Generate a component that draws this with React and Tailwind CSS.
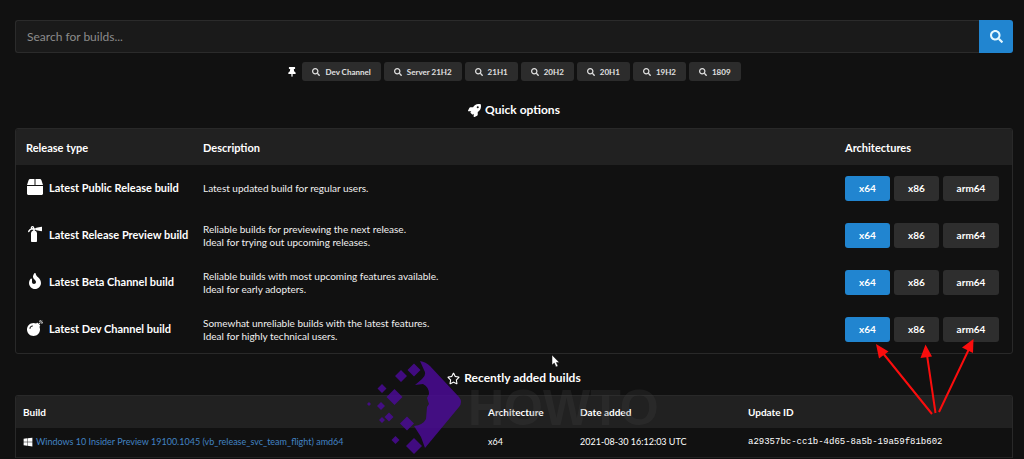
import { FaBomb, FaBox, FaFire, FaFireExtinguisher, FaRegStar, FaRocket, FaSearch, FaThumbtack, FaWindows } from 'react-icons/fa'

const pinned = ['Dev Channel', 'Server 21H2', '21H1', '20H2', '20H1', '19H2', '1809']

const releases = [
    { icon: FaBox, name: 'Latest Public Release build', lines: ['Latest updated build for regular users.'] },
    { icon: FaFireExtinguisher, name: 'Latest Release Preview build', lines: ['Reliable builds for previewing the next release.', 'Ideal for trying out upcoming releases.'] },
    { icon: FaFire, name: 'Latest Beta Channel build', lines: ['Reliable builds with most upcoming features available.', 'Ideal for early adopters.'] },
    { icon: FaBomb, name: 'Latest Dev Channel build', lines: ['Somewhat unreliable builds with the latest features.', 'Ideal for highly technical users.'] },
]

const builds = [
    {
        name: 'Windows 10 Insider Preview 19100.1045 (vb_release_svc_team_flight) amd64',
        arch: 'x64',
        added: '2021-08-30 16:12:03 UTC',
        id: 'a29357bc-cc1b-4d65-8a5b-19a59f81b602',
    },
]

const SearchBar = () => (
    <form className="flex h-[33px]" onSubmit={(e) => e.preventDefault()}>
        <input
            type="text"
            aria-label="Search for builds"
            placeholder="Search for builds..."
            className="min-w-0 flex-1 rounded-l-[3px] border border-r-0 border-[#2b2b2b] bg-[#1a1a1a] px-[11px] text-[12px] text-white outline-none placeholder:text-[#8c8c8c]"
        />
        <button type="submit" aria-label="Search" className="flex w-[34px] items-center justify-center rounded-r-[3px] bg-[#2185d0] text-[13px] text-[#e4f8ff]">
            <FaSearch />
        </button>
    </form>
)

const PinnedSearches = () => (
    <div className="mt-[9px] flex items-center justify-center gap-[3px]">
        <FaThumbtack className="mr-[2px] text-[10px]" />
        {pinned.map((label) => (
            <button key={label} type="button" className="flex h-[19px] items-center gap-[5px] rounded-[3px] bg-[#2c2c2c] px-[10px] text-[8px] font-bold text-[#e0e0e0]">
                <FaSearch />
                {label}
            </button>
        ))}
    </div>
)

const Heading = ({ icon: Icon, children }) => (
    <h2 className="flex items-center justify-center gap-1 text-[12px] leading-4 font-bold">
        <Icon className="text-[13px]" />
        {children}
    </h2>
)

const QuickOptions = () => (
    <div className="mt-[10px] overflow-hidden rounded-[3px] border border-[#292929]">
        <table className="w-full table-fixed text-left text-[11px] leading-[13px]">
            <thead className="bg-[#212121]">
                <tr className="h-9">
                    <th className="w-[177px] px-[10px]">Release type</th>
                    <th className="px-[10px]">Description</th>
                    <th className="w-[177px] px-[10px]">Architectures</th>
                </tr>
            </thead>
            <tbody>
                {releases.map(({ icon: Icon, name, lines }) => (
                    <tr key={name} className="h-[47px]">
                        <td className="px-[10px] pb-[3px]">
                            <div className="flex items-center gap-[5px] font-bold whitespace-nowrap">
                                <Icon className="w-[18px] shrink-0 text-base" />
                                {name}
                            </div>
                        </td>
                        <td className="px-[10px] text-[10px] leading-[13px] text-[#f0f0f0]">
                            {lines.map((line) => (
                                <p key={line}>{line}</p>
                            ))}
                        </td>
                        <td className="px-[10px]">
                            <div className="flex gap-1 text-[10px] font-bold">
                                <button type="button" className="h-[25px] w-[45px] rounded-[3px] bg-[#2185d0]">x64</button>
                                <button type="button" className="h-[25px] w-[45px] rounded-[3px] bg-[#2e2e2e]">x86</button>
                                <button type="button" className="h-[25px] w-14 rounded-[3px] bg-[#2e2e2e]">arm64</button>
                            </div>
                        </td>
                    </tr>
                ))}
            </tbody>
        </table>
    </div>
)

const RecentBuilds = () => (
    <div className="mt-[9px] overflow-hidden rounded-t-[3px] border border-b-0 border-[#292929]">
        <table className="w-full table-fixed text-left text-[10px] leading-3">
            <thead className="bg-[#212121]">
                <tr className="h-8">
                    <th className="px-[7px]">Build</th>
                    <th className="w-[92px] px-[7px]">Architecture</th>
                    <th className="w-[168px] px-[7px]">Date added</th>
                    <th className="w-[271px] px-[7px]">Update ID</th>
                </tr>
            </thead>
            <tbody className="text-[9px]">
                {builds.map((build) => (
                    <tr key={build.id} className="h-[29px] border-b border-[#222]">
                        <td className="px-[7px]">
                            <div className="flex items-center gap-[3px]">
                                <FaWindows className="text-[10px]" />
                                <a href="#build" className="text-[#4183c4]">{build.name}</a>
                            </div>
                        </td>
                        <td className="px-[7px]">{build.arch}</td>
                        <td className="px-[7px]">{build.added}</td>
                        <td className="px-[7px] font-['Liberation_Mono',monospace]">{build.id}</td>
                    </tr>
                ))}
            </tbody>
        </table>
    </div>
)

const Watermark = () => (
    <div className="pointer-events-none absolute top-[358px] left-[365px] flex items-center gap-[3px]">
        <svg width="100" height="99" viewBox="365 358 100 99" fill="#4a0b94" opacity=".85">
            <path d="M420 361q6 1 10 5l29 31q4 5 0 10l-34 41-4-11-7-11q9-1 12-7l1-12 2-3-2-6 2-4q0-7-6-10l-8 1 7-6q5-4 2-9z" />
            <path d="M414 363.500l6.500 6.500-6.500 6.500-6.500-6.500zM401 370l6 6-6 6-6-6zM382 384l4.500 4.500-4.500 4.500-4.500-4.500zM394.500 389l8 8-8 8-8-8zM381 402l4 4-4 4-4-4zM369 402l2 2-2 2-2-2zM389 412.500l4.500 4.500-4.500 4.500-4.500-4.500zM382 417l3 3-3 3-3-3zM407 416.500l7 7-7 7-7-7zM395.500 436l4 4-4 4-4-4zM414 438l8 8-8 8-8-8z" />
        </svg>
        <span className="font-['Liberation_Sans',sans-serif] text-[50px] leading-none font-bold text-[#444] opacity-25">HOWTO</span>
    </div>
)

const Arrows = () => (
    <svg className="pointer-events-none absolute top-[335px] left-[870px]" width="110" height="84" viewBox="870 335 110 84" fill="#fb0d0d">
        <path d="M932 414L882 352M935.500 413L927 355M939 412L969 349" strokeWidth="2" stroke="#fb0d0d" />
        <path d="M876 344l12.500 7.500-9.500 7zM925.500 344.500l6.500 12-11.500 1.500zM973.500 339l-.5 14-11-5.500z" />
    </svg>
)

const Pointer = () => (
    <svg className="pointer-events-none absolute top-[354px] left-[551px]" width="10" height="14" viewBox="0 0 10 14">
        <path d="M1 1v10l2.300-2 1.700 4 2-1-1.700-3.500h3z" fill="#fff" stroke="#111" strokeWidth=".5" />
    </svg>
)

const App = () => (
    <main className="relative h-screen overflow-hidden bg-[#111] pt-5 pr-[11px] pl-[15px] font-[Lato,sans-serif] text-white">
        <SearchBar />
        <PinnedSearches />
        <div className="mt-[21px]">
            <Heading icon={FaRocket}>Quick options</Heading>
            <QuickOptions />
        </div>
        <div className="mt-4">
            <Heading icon={FaRegStar}>Recently added builds</Heading>
            <RecentBuilds />
        </div>
        <Watermark />
        <Arrows />
        <Pointer />
    </main>
)

export default App
